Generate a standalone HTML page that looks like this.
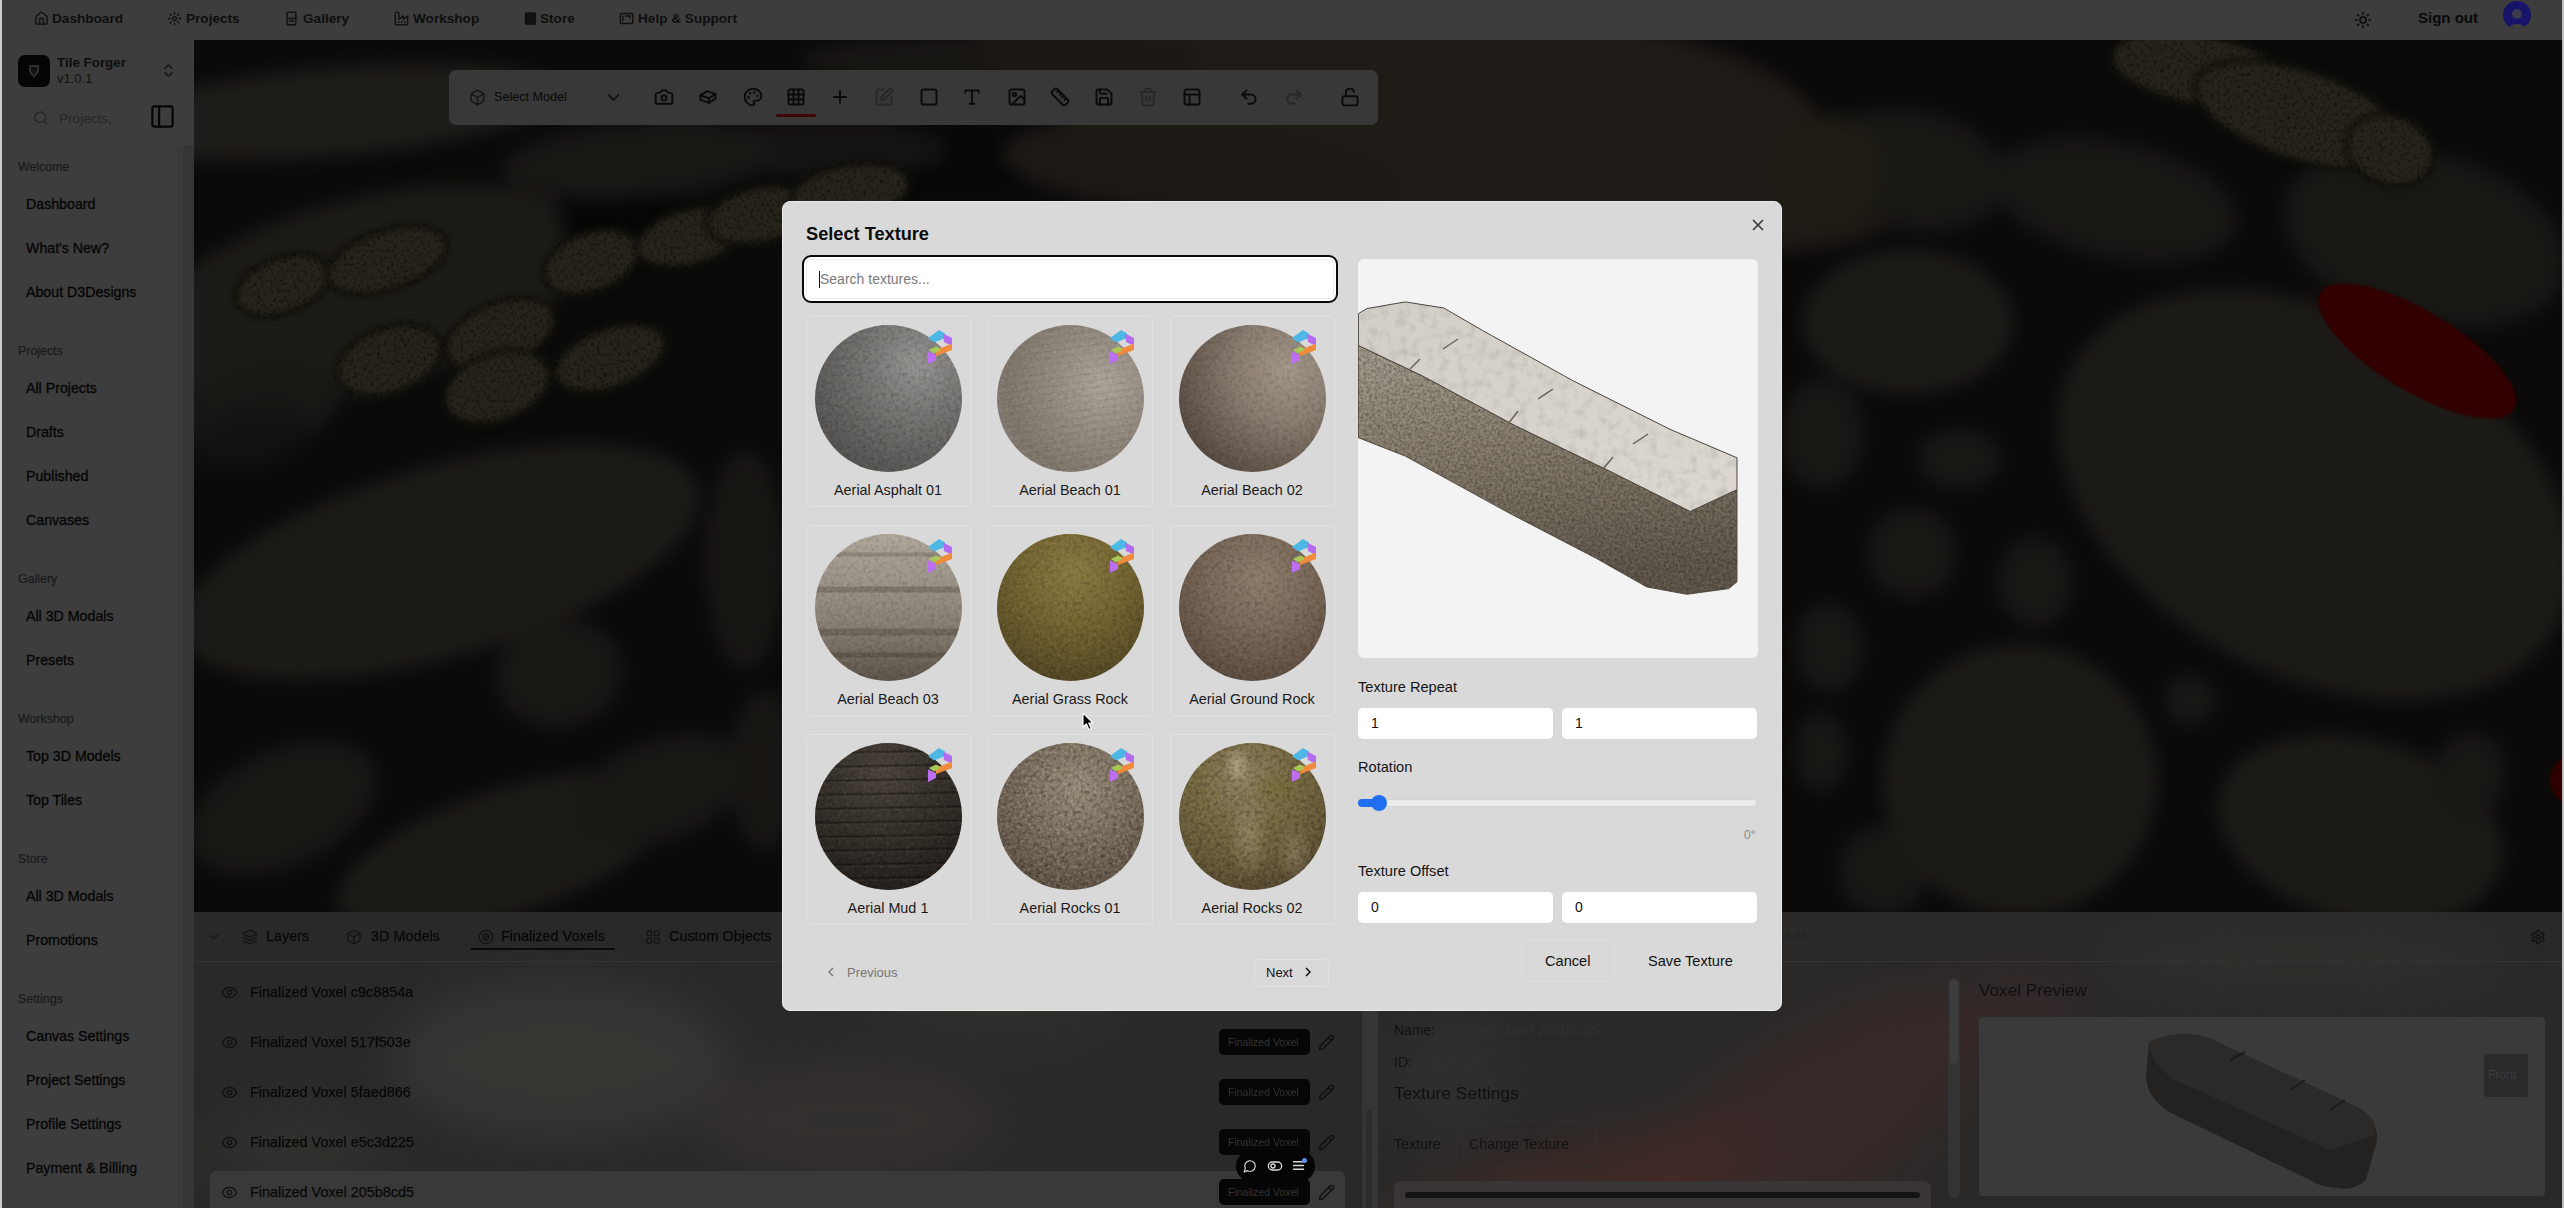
<!DOCTYPE html>
<html><head><meta charset="utf-8">
<style>
*{box-sizing:border-box;margin:0;padding:0}
html,body{width:2564px;height:1208px;overflow:hidden;background:#3c3c3c;font-family:"Liberation Sans",sans-serif;color:#111}
.a{position:absolute}
.nv{position:absolute;top:11px;font-size:13.6px;font-weight:bold;color:#0e0e0e;white-space:nowrap;line-height:16px;letter-spacing:0}
.nvi{position:absolute;top:12px;width:13px;height:13px}
.sh{position:absolute;left:18px;font-size:12.4px;color:#1a1a1a;-webkit-text-stroke:0.2px #1a1a1a;line-height:14px;white-space:nowrap}
.si{position:absolute;left:26px;font-size:14.2px;color:#050505;-webkit-text-stroke:0.3px #050505;line-height:16px;white-space:nowrap}
svg{display:block}
.card{position:absolute;width:165px;height:191px;border:1px solid #e2e2e2;border-radius:3px;background:#d9d9d9}
.sph{position:absolute;left:8px;top:8px;width:147px;height:147px;border-radius:50%}
.lbl{position:absolute;left:0;top:165px;width:162px;text-align:center;font-size:14.4px;color:#1a1a1a;line-height:16px;white-space:nowrap}
.badge{position:absolute;left:121px;top:12px;width:24px;height:35px}
.inp{position:absolute;width:195px;height:31px;background:#fff;border-radius:5px;font-size:14px;color:#111;padding:7px 0 0 13px;line-height:16px}
.ml{position:absolute;left:1358px;font-size:14.6px;color:#141414;line-height:16px;white-space:nowrap}

</style></head><body>
<div class="a" style="left:0;top:0;width:2px;height:1208px;background:#cdcdcd"></div>
<div class="a" style="left:2562px;top:0;width:2px;height:1208px;background:#bdbdbd"></div>
<div class="a" id="nav" style="left:2px;top:0;width:2560px;height:40px;background:#3d3d3d"></div>
<div class="a" id="side" style="left:2px;top:40px;width:192px;height:1168px;background:#3d3d3d"></div>
<div class="a" style="left:177px;top:145px;width:6px;height:1063px;background:#3a3a3a"></div>
<div class="a" style="left:183px;top:145px;width:11px;height:1063px;background:#353535;border-radius:5px 5px 0 0"></div>
<svg class="a" style="left:194px;top:40px" width="2368" height="873" viewBox="0 0 2368 873"><defs><filter id="bl" color-interpolation-filters="sRGB" x="-10%" y="-10%" width="120%" height="120%"><feGaussianBlur stdDeviation="9"/></filter><filter id="blm" color-interpolation-filters="sRGB" x="-10%" y="-10%" width="120%" height="120%"><feGaussianBlur stdDeviation="3"/></filter><filter id="mnz" x="0" y="0" width="100%" height="100%"><feTurbulence type="fractalNoise" baseFrequency="0.3" numOctaves="2" seed="5" result="n"/><feColorMatrix in="n" values="0 0 0 0 0  0 0 0 0 0  0 0 0 0 0  0 0 0 -2.5 1.3" result="a"/><feComposite in="a" in2="SourceAlpha" operator="in"/></filter><filter id="bl2" color-interpolation-filters="sRGB" x="-10%" y="-10%" width="120%" height="120%"><feGaussianBlur stdDeviation="1.2"/></filter></defs><rect width="2368" height="873" fill="#0b0a09"/><g filter="url(#bl)"><ellipse cx="136" cy="72" rx="230" ry="44" transform="rotate(-5 136 72)" fill="#1f1d19" opacity="1"/><ellipse cx="166" cy="255" rx="230" ry="95" transform="rotate(-15 166 255)" fill="#1d1b17" opacity="1"/><ellipse cx="66" cy="370" rx="80" ry="45" transform="rotate(-15 66 370)" fill="#191714" opacity="1"/><ellipse cx="706" cy="120" rx="170" ry="35" transform="rotate(0 706 120)" fill="#050505" opacity="0.9"/><ellipse cx="426" cy="175" rx="60" ry="60" transform="rotate(0 426 175)" fill="#050505" opacity="0.9"/><ellipse cx="636" cy="110" rx="120" ry="30" transform="rotate(0 636 110)" fill="#191714" opacity="0.8"/><ellipse cx="446" cy="120" rx="140" ry="38" transform="rotate(-5 446 120)" fill="#191714" opacity="1"/><ellipse cx="246" cy="522" rx="268" ry="95" transform="rotate(-16 246 522)" fill="#1d1b17" opacity="1"/><ellipse cx="365" cy="633" rx="64" ry="54" transform="rotate(-10 365 633)" fill="#191714" opacity="1"/><ellipse cx="89" cy="768" rx="100" ry="58" transform="rotate(-25 89 768)" fill="#191714" opacity="1"/><ellipse cx="311" cy="812" rx="175" ry="62" transform="rotate(-18 311 812)" fill="#1d1b17" opacity="1"/><ellipse cx="466" cy="750" rx="90" ry="50" transform="rotate(-20 466 750)" fill="#191714" opacity="1"/><ellipse cx="551" cy="520" rx="40" ry="110" transform="rotate(0 551 520)" fill="#191714" opacity="0.9"/><ellipse cx="571" cy="730" rx="35" ry="80" transform="rotate(0 571 730)" fill="#191714" opacity="0.9"/><ellipse cx="56" cy="400" rx="60" ry="30" transform="rotate(-15 56 400)" fill="#121110" opacity="0.8"/><ellipse cx="1246" cy="85" rx="470" ry="100" transform="rotate(10 1246 85)" fill="#1f1b16" opacity="1"/><ellipse cx="1426" cy="40" rx="200" ry="55" transform="rotate(12 1426 40)" fill="#1f1b16" opacity="1"/><ellipse cx="1006" cy="130" rx="200" ry="45" transform="rotate(5 1006 130)" fill="#1d1a15" opacity="1"/><ellipse cx="806" cy="20" rx="200" ry="25" transform="rotate(0 806 20)" fill="#191714" opacity="0.9"/><ellipse cx="1718" cy="130" rx="95" ry="60" transform="rotate(10 1718 130)" fill="#191714" opacity="1"/><ellipse cx="1921" cy="160" rx="125" ry="58" transform="rotate(12 1921 160)" fill="#191714" opacity="1"/><ellipse cx="2231" cy="198" rx="145" ry="85" transform="rotate(15 2231 198)" fill="#191714" opacity="1"/><ellipse cx="1714" cy="282" rx="105" ry="72" transform="rotate(0 1714 282)" fill="#1d1b17" opacity="1"/><ellipse cx="2121" cy="455" rx="275" ry="180" transform="rotate(28 2121 455)" fill="#1d1b17" opacity="1"/><ellipse cx="1628" cy="394" rx="42" ry="55" transform="rotate(0 1628 394)" fill="#191714" opacity="1"/><ellipse cx="1765" cy="419" rx="42" ry="30" transform="rotate(0 1765 419)" fill="#191714" opacity="1"/><ellipse cx="1718" cy="513" rx="45" ry="45" transform="rotate(0 1718 513)" fill="#191714" opacity="1"/><ellipse cx="1841" cy="542" rx="38" ry="45" transform="rotate(0 1841 542)" fill="#191714" opacity="1"/><ellipse cx="1635" cy="607" rx="34" ry="45" transform="rotate(0 1635 607)" fill="#191714" opacity="1"/><ellipse cx="1627" cy="712" rx="26" ry="40" transform="rotate(0 1627 712)" fill="#191714" opacity="1"/><ellipse cx="1689" cy="830" rx="45" ry="45" transform="rotate(0 1689 830)" fill="#191714" opacity="1"/><ellipse cx="1826" cy="740" rx="137" ry="135" transform="rotate(0 1826 740)" fill="#1d1b17" opacity="1"/><ellipse cx="2166" cy="790" rx="145" ry="90" transform="rotate(15 2166 790)" fill="#1d1b17" opacity="1"/><ellipse cx="1996" cy="660" rx="26" ry="26" transform="rotate(0 1996 660)" fill="#191714" opacity="1"/><ellipse cx="2275" cy="737" rx="36" ry="45" transform="rotate(10 2275 737)" fill="#191714" opacity="1"/><ellipse cx="1636" cy="130" rx="55" ry="55" transform="rotate(0 1636 130)" fill="#1e1c14" opacity="1"/></g><g filter="url(#blm)"><ellipse cx="89" cy="245" rx="50" ry="28" transform="rotate(-20 89 245)" fill="#26241a" opacity="1" stroke="#100f0a" stroke-width="5"/><ellipse cx="193" cy="220" rx="63" ry="30" transform="rotate(-18 193 220)" fill="#26241a" opacity="1" stroke="#100f0a" stroke-width="5"/><ellipse cx="195" cy="320" rx="55" ry="33" transform="rotate(-20 195 320)" fill="#26241a" opacity="1" stroke="#100f0a" stroke-width="5"/><ellipse cx="306" cy="294" rx="58" ry="32" transform="rotate(-22 306 294)" fill="#26241a" opacity="1" stroke="#100f0a" stroke-width="5"/><ellipse cx="303" cy="347" rx="55" ry="34" transform="rotate(-20 303 347)" fill="#26241a" opacity="1" stroke="#100f0a" stroke-width="5"/><ellipse cx="416" cy="318" rx="58" ry="30" transform="rotate(-20 416 318)" fill="#26241a" opacity="1" stroke="#100f0a" stroke-width="5"/><ellipse cx="397" cy="222" rx="50" ry="30" transform="rotate(-20 397 222)" fill="#26241a" opacity="1" stroke="#100f0a" stroke-width="5"/><ellipse cx="496" cy="197" rx="55" ry="28" transform="rotate(-15 496 197)" fill="#26241a" opacity="1" stroke="#100f0a" stroke-width="5"/><ellipse cx="566" cy="175" rx="55" ry="28" transform="rotate(-12 566 175)" fill="#26241a" opacity="1" stroke="#100f0a" stroke-width="5"/><ellipse cx="656" cy="152" rx="60" ry="28" transform="rotate(-10 656 152)" fill="#26241a" opacity="1" stroke="#100f0a" stroke-width="5"/><ellipse cx="2006" cy="30" rx="90" ry="35" transform="rotate(10 2006 30)" fill="#26241a" opacity="1" stroke="#100f0a" stroke-width="5"/><ellipse cx="2106" cy="75" rx="110" ry="45" transform="rotate(18 2106 75)" fill="#26241a" opacity="1" stroke="#100f0a" stroke-width="5"/><ellipse cx="2196" cy="110" rx="45" ry="35" transform="rotate(20 2196 110)" fill="#26241a" opacity="1" stroke="#100f0a" stroke-width="5"/></g><g filter="url(#mnz)" opacity="0.55"><ellipse cx="89" cy="245" rx="50" ry="28" transform="rotate(-20 89 245)" fill="#000" opacity="1" stroke="#100f0a" stroke-width="5"/><ellipse cx="193" cy="220" rx="63" ry="30" transform="rotate(-18 193 220)" fill="#000" opacity="1" stroke="#100f0a" stroke-width="5"/><ellipse cx="195" cy="320" rx="55" ry="33" transform="rotate(-20 195 320)" fill="#000" opacity="1" stroke="#100f0a" stroke-width="5"/><ellipse cx="306" cy="294" rx="58" ry="32" transform="rotate(-22 306 294)" fill="#000" opacity="1" stroke="#100f0a" stroke-width="5"/><ellipse cx="303" cy="347" rx="55" ry="34" transform="rotate(-20 303 347)" fill="#000" opacity="1" stroke="#100f0a" stroke-width="5"/><ellipse cx="416" cy="318" rx="58" ry="30" transform="rotate(-20 416 318)" fill="#000" opacity="1" stroke="#100f0a" stroke-width="5"/><ellipse cx="397" cy="222" rx="50" ry="30" transform="rotate(-20 397 222)" fill="#000" opacity="1" stroke="#100f0a" stroke-width="5"/><ellipse cx="496" cy="197" rx="55" ry="28" transform="rotate(-15 496 197)" fill="#000" opacity="1" stroke="#100f0a" stroke-width="5"/><ellipse cx="566" cy="175" rx="55" ry="28" transform="rotate(-12 566 175)" fill="#000" opacity="1" stroke="#100f0a" stroke-width="5"/><ellipse cx="656" cy="152" rx="60" ry="28" transform="rotate(-10 656 152)" fill="#000" opacity="1" stroke="#100f0a" stroke-width="5"/><ellipse cx="2006" cy="30" rx="90" ry="35" transform="rotate(10 2006 30)" fill="#000" opacity="1" stroke="#100f0a" stroke-width="5"/><ellipse cx="2106" cy="75" rx="110" ry="45" transform="rotate(18 2106 75)" fill="#000" opacity="1" stroke="#100f0a" stroke-width="5"/><ellipse cx="2196" cy="110" rx="45" ry="35" transform="rotate(20 2196 110)" fill="#000" opacity="1" stroke="#100f0a" stroke-width="5"/></g><g filter="url(#bl2)"><ellipse cx="2223" cy="311" rx="113" ry="40" transform="rotate(31 2223 311)" fill="#320000"/><ellipse cx="2388" cy="740" rx="32" ry="28" fill="#300000"/></g></svg>
<svg class="a" style="left:34px;top:11px;opacity:1;color:#111" width="15" height="15" viewBox="0 0 24 24" fill="none" stroke="currentColor" stroke-width="2.2" stroke-linecap="round" stroke-linejoin="round"><path d="M15 21v-8a1 1 0 0 0-1-1h-4a1 1 0 0 0-1 1v8"/><path d="M3 10a2 2 0 0 1 .709-1.528l7-5.999a2 2 0 0 1 2.582 0l7 5.999A2 2 0 0 1 21 10v9a2 2 0 0 1-2 2H5a2 2 0 0 1-2-2z"/></svg>
<div class="nv" style="left:52px">Dashboard</div>
<svg class="a" style="left:167px;top:11px;opacity:1;color:#111" width="15" height="15" viewBox="0 0 24 24" fill="none" stroke="currentColor" stroke-width="2.2" stroke-linecap="round" stroke-linejoin="round"><circle cx="12" cy="12" r="3"/><path d="M12 2v3M12 19v3M2 12h3M19 12h3M4.9 4.9l2.1 2.1M17 17l2.1 2.1M4.9 19.1 7 17M17 7l2.1-2.1"/></svg>
<div class="nv" style="left:186px">Projects</div>
<svg class="a" style="left:284px;top:11px;opacity:1;color:#111" width="15" height="15" viewBox="0 0 24 24" fill="none" stroke="currentColor" stroke-width="2.2" stroke-linecap="round" stroke-linejoin="round"><rect x="5" y="2" width="14" height="20" rx="1"/><path d="M5 12h14M9 16h6"/></svg>
<div class="nv" style="left:303px">Gallery</div>
<svg class="a" style="left:394px;top:11px;opacity:1;color:#111" width="15" height="15" viewBox="0 0 24 24" fill="none" stroke="currentColor" stroke-width="2.2" stroke-linecap="round" stroke-linejoin="round"><path d="M2 20a2 2 0 0 0 2 2h16a2 2 0 0 0 2-2V8l-7 5V8l-7 5V4a2 2 0 0 0-2-2H4a2 2 0 0 0-2 2Z"/><path d="M17 18h1M12 18h1M7 18h1"/></svg>
<div class="nv" style="left:413px">Workshop</div>
<svg class="a" style="left:523px;top:11px;opacity:1;color:#111" width="15" height="15" viewBox="0 0 24 24" fill="none" stroke="currentColor" stroke-width="2.2" stroke-linecap="round" stroke-linejoin="round"><rect x="4" y="3" width="16" height="18" rx="2" fill="currentColor"/></svg>
<div class="nv" style="left:540px">Store</div>
<svg class="a" style="left:619px;top:11px;opacity:1;color:#111" width="15" height="15" viewBox="0 0 24 24" fill="none" stroke="currentColor" stroke-width="2.2" stroke-linecap="round" stroke-linejoin="round"><rect x="2" y="4" width="20" height="16" rx="2"/><path d="M6 8v8M10 8h6M18 8v3"/></svg>
<div class="nv" style="left:638px">Help &amp; Support</div>
<svg class="a" style="left:2354px;top:11px;opacity:1;color:#0a0a0a" width="18" height="18" viewBox="0 0 24 24" fill="none" stroke="currentColor" stroke-width="2.2" stroke-linecap="round" stroke-linejoin="round"><circle cx="12" cy="12" r="4"/><path d="M12 2v2M12 20v2m-7.07-17.07 1.41 1.41m11.32 11.32 1.41 1.41M2 12h2M20 12h2M6.34 17.66l-1.41 1.41M19.07 4.93l-1.41 1.41"/></svg>
<div class="nv" style="left:2418px;top:10px;font-weight:bold;font-size:15px;color:#0a0a0a">Sign out</div>
<div class="a" style="left:2503px;top:1px;width:28px;height:28px;border-radius:50%;background:#17146a;overflow:hidden"><div class="a" style="left:9px;top:8px;width:10px;height:10px;border-radius:50%;background:#3a3a48"></div><div class="a" style="left:5px;top:23px;width:18px;height:12px;border-radius:50%;background:#3d3d3d"></div></div>
<div class="a" style="left:18px;top:55px;width:32px;height:32px;background:#050505;border-radius:7px"></div>
<svg class="a" style="left:26px;top:62px" width="16" height="18" viewBox="0 0 16 18"><path d="M3 3 L13 3 L13 10 L8 16 L3 10 Z" fill="#2e2e2e"/><path d="M5 5 L11 5 L11 9 L8 13 L5 9 Z" fill="#111"/></svg>
<div class="a" style="left:57px;top:56px;font-size:13.4px;font-weight:bold;color:#0e0e0e;line-height:14px">Tile Forger</div>
<div class="a" style="left:57px;top:72px;font-size:13px;color:#111;line-height:14px">v1.0.1</div>
<svg class="a" style="left:160px;top:62px;opacity:1;color:#151515" width="17" height="17" viewBox="0 0 24 24" fill="none" stroke="currentColor" stroke-width="2" stroke-linecap="round" stroke-linejoin="round"><path d="m7 15 5 5 5-5M7 9l5-5 5 5"/></svg>
<svg class="a" style="left:33px;top:110px;opacity:1;color:#262626" width="16" height="16" viewBox="0 0 24 24" fill="none" stroke="currentColor" stroke-width="2" stroke-linecap="round" stroke-linejoin="round"><circle cx="11" cy="11" r="8"/><path d="m21 21-4.3-4.3"/></svg>
<div class="a" style="left:59px;top:111px;font-size:13.6px;color:#262626;line-height:16px">Projects,</div>
<svg class="a" style="left:149px;top:103px;opacity:1;color:#050505" width="27" height="27" viewBox="0 0 24 24" fill="none" stroke="currentColor" stroke-width="1.9" stroke-linecap="round" stroke-linejoin="round"><rect x="3" y="3" width="18" height="18" rx="2"/><path d="M9 3v18"/></svg>
<div class="sh" style="top:160px">Welcome</div>
<div class="si" style="top:196px">Dashboard</div>
<div class="si" style="top:240px">What's New?</div>
<div class="si" style="top:284px">About D3Designs</div>
<div class="sh" style="top:344px">Projects</div>
<div class="si" style="top:380px">All Projects</div>
<div class="si" style="top:424px">Drafts</div>
<div class="si" style="top:468px">Published</div>
<div class="si" style="top:512px">Canvases</div>
<div class="sh" style="top:572px">Gallery</div>
<div class="si" style="top:608px">All 3D Modals</div>
<div class="si" style="top:652px">Presets</div>
<div class="sh" style="top:712px">Workshop</div>
<div class="si" style="top:748px">Top 3D Models</div>
<div class="si" style="top:792px">Top Tiles</div>
<div class="sh" style="top:852px">Store</div>
<div class="si" style="top:888px">All 3D Modals</div>
<div class="si" style="top:932px">Promotions</div>
<div class="sh" style="top:992px">Settings</div>
<div class="si" style="top:1028px">Canvas Settings</div>
<div class="si" style="top:1072px">Project Settings</div>
<div class="si" style="top:1116px">Profile Settings</div>
<div class="si" style="top:1160px">Payment &amp; Billing</div>
<div class="a" style="left:449px;top:70px;width:929px;height:55px;background:#383838;border-radius:7px"></div>
<svg class="a" style="left:469px;top:89px;opacity:1;color:#151515" width="17" height="17" viewBox="0 0 24 24" fill="none" stroke="currentColor" stroke-width="2" stroke-linecap="round" stroke-linejoin="round"><path d="M21 8a2 2 0 0 0-1-1.73l-7-4a2 2 0 0 0-2 0l-7 4A2 2 0 0 0 3 8v8a2 2 0 0 0 1 1.73l7 4a2 2 0 0 0 2 0l7-4A2 2 0 0 0 21 16Z"/><path d="m3.3 7 8.7 5 8.7-5"/><path d="M12 22V12"/></svg>
<div class="a" style="left:494px;top:90px;font-size:12.6px;color:#080808;line-height:14px;white-space:nowrap">Select Model</div>
<svg class="a" style="left:604px;top:88px;opacity:1;color:#111" width="19" height="19" viewBox="0 0 24 24" fill="none" stroke="currentColor" stroke-width="2.2" stroke-linecap="round" stroke-linejoin="round"><path d="m6 9 6 6 6-6"/></svg>
<svg class="a" style="left:654px;top:87px;opacity:1;color:#0a0a0a" width="20" height="20" viewBox="0 0 24 24" fill="none" stroke="currentColor" stroke-width="2.3" stroke-linecap="round" stroke-linejoin="round"><path d="M14.5 4h-5L7 7H4a2 2 0 0 0-2 2v9a2 2 0 0 0 2 2h16a2 2 0 0 0 2-2V9a2 2 0 0 0-2-2h-3l-2.5-3z"/><circle cx="12" cy="13" r="3"/></svg>
<svg class="a" style="left:698px;top:87px;opacity:1;color:#0a0a0a" width="20" height="20" viewBox="0 0 24 24" fill="none" stroke="currentColor" stroke-width="2.3" stroke-linecap="round" stroke-linejoin="round"><path d="M3 10 L11 5 L21 8.5 L21 14 L13 19 L3 15.5 Z"/><path d="M3 10 L13 13.5 L21 8.5"/><path d="M13 13.5 V19"/></svg>
<svg class="a" style="left:743px;top:87px;opacity:1;color:#0a0a0a" width="20" height="20" viewBox="0 0 24 24" fill="none" stroke="currentColor" stroke-width="2.3" stroke-linecap="round" stroke-linejoin="round"><circle cx="13.5" cy="6.5" r=".5" fill="currentColor"/><circle cx="17.5" cy="10.5" r=".5" fill="currentColor"/><circle cx="8.5" cy="7.5" r=".5" fill="currentColor"/><circle cx="6.5" cy="12.5" r=".5" fill="currentColor"/><path d="M12 2C6.5 2 2 6.5 2 12s4.5 10 10 10c.926 0 1.648-.746 1.648-1.688 0-.437-.18-.835-.437-1.125-.29-.289-.438-.652-.438-1.125a1.64 1.64 0 0 1 1.668-1.668h1.996c3.051 0 5.555-2.503 5.555-5.554C21.965 6.012 17.461 2 12 2z"/></svg>
<svg class="a" style="left:786px;top:87px;opacity:1;color:#0a0a0a" width="20" height="20" viewBox="0 0 24 24" fill="none" stroke="currentColor" stroke-width="2.3" stroke-linecap="round" stroke-linejoin="round"><rect x="3" y="3" width="18" height="18" rx="2"/><path d="M3 9h18M3 15h18M9 3v18M15 3v18"/></svg>
<svg class="a" style="left:830px;top:87px;opacity:1;color:#0a0a0a" width="20" height="20" viewBox="0 0 24 24" fill="none" stroke="currentColor" stroke-width="2.3" stroke-linecap="round" stroke-linejoin="round"><path d="M5 12h14M12 5v14"/></svg>
<svg class="a" style="left:874px;top:87px;opacity:0.35;color:#0a0a0a" width="20" height="20" viewBox="0 0 24 24" fill="none" stroke="currentColor" stroke-width="2.3" stroke-linecap="round" stroke-linejoin="round"><path d="M12 3H5a2 2 0 0 0-2 2v14a2 2 0 0 0 2 2h14a2 2 0 0 0 2-2v-7"/><path d="M18.375 2.625a2.121 2.121 0 1 1 3 3L12 15l-4 1 1-4Z"/></svg>
<svg class="a" style="left:919px;top:87px;opacity:1;color:#0a0a0a" width="20" height="20" viewBox="0 0 24 24" fill="none" stroke="currentColor" stroke-width="2.3" stroke-linecap="round" stroke-linejoin="round"><rect x="3" y="3" width="18" height="18" rx="2"/></svg>
<svg class="a" style="left:962px;top:87px;opacity:1;color:#0a0a0a" width="20" height="20" viewBox="0 0 24 24" fill="none" stroke="currentColor" stroke-width="2.3" stroke-linecap="round" stroke-linejoin="round"><path d="M4 7V4h16v3M9 20h6M12 4v16"/></svg>
<svg class="a" style="left:1007px;top:87px;opacity:1;color:#0a0a0a" width="20" height="20" viewBox="0 0 24 24" fill="none" stroke="currentColor" stroke-width="2.3" stroke-linecap="round" stroke-linejoin="round"><rect x="3" y="3" width="18" height="18" rx="2"/><circle cx="9" cy="9" r="2"/><path d="m21 15-3.086-3.086a2 2 0 0 0-2.828 0L6 21"/></svg>
<svg class="a" style="left:1050px;top:87px;opacity:1;color:#0a0a0a" width="20" height="20" viewBox="0 0 24 24" fill="none" stroke="currentColor" stroke-width="2.3" stroke-linecap="round" stroke-linejoin="round"><path d="M21.3 15.3a2.4 2.4 0 0 1 0 3.4l-2.6 2.6a2.4 2.4 0 0 1-3.4 0L2.7 8.7a2.41 2.41 0 0 1 0-3.4l2.6-2.6a2.41 2.41 0 0 1 3.4 0Z"/><path d="m14.5 12.5 2-2M11.5 9.5l2-2M8.5 6.5l2-2M17.5 15.5l2-2"/></svg>
<svg class="a" style="left:1094px;top:87px;opacity:1;color:#0a0a0a" width="20" height="20" viewBox="0 0 24 24" fill="none" stroke="currentColor" stroke-width="2.3" stroke-linecap="round" stroke-linejoin="round"><path d="M15.2 3a2 2 0 0 1 1.4.6l3.8 3.8a2 2 0 0 1 .6 1.4V19a2 2 0 0 1-2 2H5a2 2 0 0 1-2-2V5a2 2 0 0 1 2-2z"/><path d="M17 21v-7a1 1 0 0 0-1-1H8a1 1 0 0 0-1 1v7"/><path d="M7 3v4a1 1 0 0 0 1 1h7"/></svg>
<svg class="a" style="left:1138px;top:87px;opacity:0.35;color:#0a0a0a" width="20" height="20" viewBox="0 0 24 24" fill="none" stroke="currentColor" stroke-width="2.3" stroke-linecap="round" stroke-linejoin="round"><path d="M3 6h18M19 6v14c0 1-1 2-2 2H7c-1 0-2-1-2-2V6M8 6V4c0-1 1-2 2-2h4c1 0 2 1 2 2v2M10 11v6M14 11v6"/></svg>
<svg class="a" style="left:1182px;top:87px;opacity:1;color:#0a0a0a" width="20" height="20" viewBox="0 0 24 24" fill="none" stroke="currentColor" stroke-width="2.3" stroke-linecap="round" stroke-linejoin="round"><rect x="3" y="3" width="18" height="18" rx="2"/><path d="M3 9h18M9 21V9"/></svg>
<svg class="a" style="left:1239px;top:87px;opacity:1;color:#0a0a0a" width="20" height="20" viewBox="0 0 24 24" fill="none" stroke="currentColor" stroke-width="2.3" stroke-linecap="round" stroke-linejoin="round"><path d="M9 14 4 9l5-5"/><path d="M4 9h10.5a5.5 5.5 0 0 1 5.5 5.5a5.5 5.5 0 0 1-5.5 5.5H11"/></svg>
<svg class="a" style="left:1284px;top:87px;opacity:0.35;color:#0a0a0a" width="20" height="20" viewBox="0 0 24 24" fill="none" stroke="currentColor" stroke-width="2.3" stroke-linecap="round" stroke-linejoin="round"><path d="m15 14 5-5-5-5"/><path d="M20 9H9.5A5.5 5.5 0 0 0 4 14.5A5.5 5.5 0 0 0 9.5 20H13"/></svg>
<svg class="a" style="left:1340px;top:87px;opacity:1;color:#0a0a0a" width="20" height="20" viewBox="0 0 24 24" fill="none" stroke="currentColor" stroke-width="2.3" stroke-linecap="round" stroke-linejoin="round"><rect x="3" y="11" width="18" height="11" rx="2"/><path d="M7 11V7a5 5 0 0 1 9.9-1"/></svg>
<div class="a" style="left:776px;top:114px;width:40px;height:3px;background:#3e0606;border-radius:2px"></div><div class="a" style="left:194px;top:912px;width:2368px;height:296px;background:#2a2927"></div>
<svg class="a" style="left:194px;top:912px" width="2368" height="296" viewBox="194 912 2368 296"><defs><filter id="pbl" color-interpolation-filters="sRGB" x="-20%" y="-20%" width="140%" height="140%"><feGaussianBlur stdDeviation="22"/></filter></defs><g filter="url(#pbl)"><ellipse cx="1790" cy="1140" rx="230" ry="85" transform="rotate(-35 1790 1140)" fill="#44292a" opacity="0.5"/><ellipse cx="1560" cy="1200" rx="200" ry="50" transform="rotate(-15 1560 1200)" fill="#4a2a27" opacity="0.6"/><ellipse cx="2020" cy="1010" rx="60" ry="30" fill="#46282a" opacity="0.4"/><ellipse cx="560" cy="1060" rx="170" ry="80" fill="#3c3a37" opacity="0.7"/><ellipse cx="850" cy="1120" rx="150" ry="60" fill="#383633" opacity="0.6"/><ellipse cx="300" cy="1150" rx="90" ry="50" fill="#363431" opacity="0.6"/><ellipse cx="1000" cy="1000" rx="120" ry="50" fill="#353330" opacity="0.5"/><ellipse cx="1450" cy="1080" rx="60" ry="70" fill="#363431" opacity="0.5"/><ellipse cx="2300" cy="960" rx="200" ry="40" fill="#353330" opacity="0.5"/></g></svg>
<svg class="a" style="left:207px;top:930px;opacity:1;color:#151515" width="14" height="14" viewBox="0 0 24 24" fill="none" stroke="currentColor" stroke-width="2.2" stroke-linecap="round" stroke-linejoin="round"><path d="m6 9 6 6 6-6"/></svg>
<svg class="a" style="left:242px;top:929px;opacity:1;color:#141414" width="16" height="16" viewBox="0 0 24 24" fill="none" stroke="currentColor" stroke-width="2" stroke-linecap="round" stroke-linejoin="round"><path d="M12.83 2.18a2 2 0 0 0-1.66 0L2.6 6.08a1 1 0 0 0 0 1.83l8.58 3.91a2 2 0 0 0 1.66 0l8.58-3.9a1 1 0 0 0 0-1.83Z"/><path d="m22 17.65-9.17 4.16a2 2 0 0 1-1.66 0L2 17.65"/><path d="m22 12.65-9.17 4.16a2 2 0 0 1-1.66 0L2 12.65"/></svg>
<div class="a" style="left:266px;top:928px;font-size:14.4px;color:#080808;-webkit-text-stroke:0.25px #080808;line-height:16px;white-space:nowrap">Layers</div>
<svg class="a" style="left:346px;top:929px;opacity:1;color:#141414" width="16" height="16" viewBox="0 0 24 24" fill="none" stroke="currentColor" stroke-width="2" stroke-linecap="round" stroke-linejoin="round"><path d="M21 8a2 2 0 0 0-1-1.73l-7-4a2 2 0 0 0-2 0l-7 4A2 2 0 0 0 3 8v8a2 2 0 0 0 1 1.73l7 4a2 2 0 0 0 2 0l7-4A2 2 0 0 0 21 16Z"/><path d="m3.3 7 8.7 5 8.7-5"/><path d="M12 22V12"/></svg>
<div class="a" style="left:371px;top:928px;font-size:14.4px;color:#080808;-webkit-text-stroke:0.25px #080808;line-height:16px;white-space:nowrap">3D Models</div>
<svg class="a" style="left:478px;top:929px;opacity:1;color:#141414" width="16" height="16" viewBox="0 0 24 24" fill="none" stroke="currentColor" stroke-width="2" stroke-linecap="round" stroke-linejoin="round"><circle cx="12" cy="12" r="10"/><path d="M12 7 L16 9.5 V14.5 L12 17 L8 14.5 V9.5 Z"/><path d="M8 9.5 L12 12 L16 9.5 M12 12 V17"/></svg>
<div class="a" style="left:501px;top:928px;font-size:14.4px;color:#080808;-webkit-text-stroke:0.25px #080808;line-height:16px;white-space:nowrap">Finalized Voxels</div>
<svg class="a" style="left:645px;top:929px;opacity:1;color:#141414" width="16" height="16" viewBox="0 0 24 24" fill="none" stroke="currentColor" stroke-width="2" stroke-linecap="round" stroke-linejoin="round"><rect x="3" y="3" width="7" height="7" rx="1"/><rect x="14" y="3" width="7" height="7" rx="1"/><rect x="14" y="14" width="7" height="7" rx="1"/><rect x="3" y="14" width="7" height="7" rx="1"/></svg>
<div class="a" style="left:669px;top:928px;font-size:14.4px;color:#080808;-webkit-text-stroke:0.25px #080808;line-height:16px;white-space:nowrap">Custom Objects</div>
<div class="a" style="left:471px;top:948px;width:144px;height:2px;background:#0a0a0a"></div>
<div class="a" style="left:1783px;top:929px;font-size:12px;color:#222;line-height:14px">A #4</div>
<svg class="a" style="left:2530px;top:929px;opacity:1;color:#111" width="16" height="16" viewBox="0 0 24 24" fill="none" stroke="currentColor" stroke-width="2" stroke-linecap="round" stroke-linejoin="round"><path d="M12.22 2h-.44a2 2 0 0 0-2 2v.18a2 2 0 0 1-1 1.73l-.43.25a2 2 0 0 1-2 0l-.15-.08a2 2 0 0 0-2.73.73l-.22.38a2 2 0 0 0 .73 2.73l.15.1a2 2 0 0 1 1 1.72v.51a2 2 0 0 1-1 1.74l-.15.09a2 2 0 0 0-.73 2.73l.22.38a2 2 0 0 0 2.73.73l.15-.08a2 2 0 0 1 2 0l.43.25a2 2 0 0 1 1 1.73V20a2 2 0 0 0 2 2h.44a2 2 0 0 0 2-2v-.18a2 2 0 0 1 1-1.73l.43-.25a2 2 0 0 1 2 0l.15.08a2 2 0 0 0 2.73-.73l.22-.39a2 2 0 0 0-.73-2.73l-.15-.08a2 2 0 0 1-1-1.74v-.5a2 2 0 0 1 1-1.74l.15-.09a2 2 0 0 0 .73-2.73l-.22-.38a2 2 0 0 0-2.73-.73l-.15.08a2 2 0 0 1-2 0l-.43-.25a2 2 0 0 1-1-1.73V4a2 2 0 0 0-2-2z"/><circle cx="12" cy="12" r="3"/></svg>
<div class="a" style="left:194px;top:961px;width:2368px;height:1px;background:#343331"></div>
<svg class="a" style="left:221px;top:984px;opacity:1;color:#121212" width="17" height="17" viewBox="0 0 24 24" fill="none" stroke="currentColor" stroke-width="2" stroke-linecap="round" stroke-linejoin="round"><path d="M2.062 12.348a1 1 0 0 1 0-.696 10.75 10.75 0 0 1 19.876 0 1 1 0 0 1 0 .696 10.75 10.75 0 0 1-19.876 0"/><circle cx="12" cy="12" r="3"/></svg>
<div class="a" style="left:250px;top:984px;font-size:14.4px;color:#080808;-webkit-text-stroke:0.25px #080808;line-height:16px;white-space:nowrap">Finalized Voxel c9c8854a</div>
<svg class="a" style="left:221px;top:1034px;opacity:1;color:#121212" width="17" height="17" viewBox="0 0 24 24" fill="none" stroke="currentColor" stroke-width="2" stroke-linecap="round" stroke-linejoin="round"><path d="M2.062 12.348a1 1 0 0 1 0-.696 10.75 10.75 0 0 1 19.876 0 1 1 0 0 1 0 .696 10.75 10.75 0 0 1-19.876 0"/><circle cx="12" cy="12" r="3"/></svg>
<div class="a" style="left:250px;top:1034px;font-size:14.4px;color:#080808;-webkit-text-stroke:0.25px #080808;line-height:16px;white-space:nowrap">Finalized Voxel 517f503e</div>
<div class="a" style="left:1219px;top:1029px;width:91px;height:26px;background:#060606;border-radius:5px"></div>
<div class="a" style="left:1228px;top:1036px;font-size:10.5px;color:#333;line-height:12px;white-space:nowrap">Finalized Voxel</div>
<svg class="a" style="left:1318px;top:1034px;opacity:1;color:#101010" width="17" height="17" viewBox="0 0 24 24" fill="none" stroke="currentColor" stroke-width="2" stroke-linecap="round" stroke-linejoin="round"><path d="M21.174 6.812a1 1 0 0 0-3.986-3.987L3.842 16.174a2 2 0 0 0-.5.83l-1.321 4.352a.5.5 0 0 0 .623.622l4.353-1.32a2 2 0 0 0 .83-.497z"/><path d="m15 5 4 4"/></svg>
<svg class="a" style="left:221px;top:1084px;opacity:1;color:#121212" width="17" height="17" viewBox="0 0 24 24" fill="none" stroke="currentColor" stroke-width="2" stroke-linecap="round" stroke-linejoin="round"><path d="M2.062 12.348a1 1 0 0 1 0-.696 10.75 10.75 0 0 1 19.876 0 1 1 0 0 1 0 .696 10.75 10.75 0 0 1-19.876 0"/><circle cx="12" cy="12" r="3"/></svg>
<div class="a" style="left:250px;top:1084px;font-size:14.4px;color:#080808;-webkit-text-stroke:0.25px #080808;line-height:16px;white-space:nowrap">Finalized Voxel 5faed866</div>
<div class="a" style="left:1219px;top:1079px;width:91px;height:26px;background:#060606;border-radius:5px"></div>
<div class="a" style="left:1228px;top:1086px;font-size:10.5px;color:#333;line-height:12px;white-space:nowrap">Finalized Voxel</div>
<svg class="a" style="left:1318px;top:1084px;opacity:1;color:#101010" width="17" height="17" viewBox="0 0 24 24" fill="none" stroke="currentColor" stroke-width="2" stroke-linecap="round" stroke-linejoin="round"><path d="M21.174 6.812a1 1 0 0 0-3.986-3.987L3.842 16.174a2 2 0 0 0-.5.83l-1.321 4.352a.5.5 0 0 0 .623.622l4.353-1.32a2 2 0 0 0 .83-.497z"/><path d="m15 5 4 4"/></svg>
<svg class="a" style="left:221px;top:1134px;opacity:1;color:#121212" width="17" height="17" viewBox="0 0 24 24" fill="none" stroke="currentColor" stroke-width="2" stroke-linecap="round" stroke-linejoin="round"><path d="M2.062 12.348a1 1 0 0 1 0-.696 10.75 10.75 0 0 1 19.876 0 1 1 0 0 1 0 .696 10.75 10.75 0 0 1-19.876 0"/><circle cx="12" cy="12" r="3"/></svg>
<div class="a" style="left:250px;top:1134px;font-size:14.4px;color:#080808;-webkit-text-stroke:0.25px #080808;line-height:16px;white-space:nowrap">Finalized Voxel e5c3d225</div>
<div class="a" style="left:1219px;top:1129px;width:91px;height:26px;background:#060606;border-radius:5px"></div>
<div class="a" style="left:1228px;top:1136px;font-size:10.5px;color:#333;line-height:12px;white-space:nowrap">Finalized Voxel</div>
<svg class="a" style="left:1318px;top:1134px;opacity:1;color:#101010" width="17" height="17" viewBox="0 0 24 24" fill="none" stroke="currentColor" stroke-width="2" stroke-linecap="round" stroke-linejoin="round"><path d="M21.174 6.812a1 1 0 0 0-3.986-3.987L3.842 16.174a2 2 0 0 0-.5.83l-1.321 4.352a.5.5 0 0 0 .623.622l4.353-1.32a2 2 0 0 0 .83-.497z"/><path d="m15 5 4 4"/></svg>
<div class="a" style="left:210px;top:1171px;width:1135px;height:37px;background:#393939;border-radius:6px 6px 0 0"></div>
<svg class="a" style="left:221px;top:1184px;opacity:1;color:#121212" width="17" height="17" viewBox="0 0 24 24" fill="none" stroke="currentColor" stroke-width="2" stroke-linecap="round" stroke-linejoin="round"><path d="M2.062 12.348a1 1 0 0 1 0-.696 10.75 10.75 0 0 1 19.876 0 1 1 0 0 1 0 .696 10.75 10.75 0 0 1-19.876 0"/><circle cx="12" cy="12" r="3"/></svg>
<div class="a" style="left:250px;top:1184px;font-size:14.4px;color:#080808;-webkit-text-stroke:0.25px #080808;line-height:16px;white-space:nowrap">Finalized Voxel 205b8cd5</div>
<div class="a" style="left:1219px;top:1179px;width:91px;height:26px;background:#060606;border-radius:5px"></div>
<div class="a" style="left:1228px;top:1186px;font-size:10.5px;color:#333;line-height:12px;white-space:nowrap">Finalized Voxel</div>
<svg class="a" style="left:1318px;top:1184px;opacity:1;color:#101010" width="17" height="17" viewBox="0 0 24 24" fill="none" stroke="currentColor" stroke-width="2" stroke-linecap="round" stroke-linejoin="round"><path d="M21.174 6.812a1 1 0 0 0-3.986-3.987L3.842 16.174a2 2 0 0 0-.5.83l-1.321 4.352a.5.5 0 0 0 .623.622l4.353-1.32a2 2 0 0 0 .83-.497z"/><path d="m15 5 4 4"/></svg>
<div class="a" style="left:1236px;top:1150px;width:79px;height:32px;background:#050505;border-radius:16px"></div>
<svg class="a" style="left:1243px;top:1159px;opacity:1;color:#d8d8d8" width="14" height="14" viewBox="0 0 24 24" fill="none" stroke="currentColor" stroke-width="2" stroke-linecap="round" stroke-linejoin="round"><path d="M7.9 20A9 9 0 1 0 4 16.1L2 22Z"/></svg>
<svg class="a" style="left:1267px;top:1158px;opacity:1;color:#d8d8d8" width="16" height="16" viewBox="0 0 24 24" fill="none" stroke="currentColor" stroke-width="2" stroke-linecap="round" stroke-linejoin="round"><rect x="2" y="6" width="20" height="12" rx="6"/><circle cx="9" cy="12" r="3"/></svg>
<svg class="a" style="left:1291px;top:1158px;opacity:1;color:#d8d8d8" width="15" height="15" viewBox="0 0 24 24" fill="none" stroke="currentColor" stroke-width="2.2" stroke-linecap="round" stroke-linejoin="round"><path d="M4 6h16M4 12h16M4 18h16"/></svg>
<div class="a" style="left:1302px;top:1158px;width:5px;height:5px;border-radius:50%;background:#5b8ee6"></div>
<div class="a" style="left:1362px;top:1011px;width:16px;height:197px;background:#353535"></div>
<div class="a" style="left:1366px;top:1110px;width:6px;height:98px;background:#2c2c2c;border-radius:3px"></div>
<div class="a" style="left:1394px;top:1022px;font-size:14px;color:#121212;line-height:16px">Name:</div>
<div class="a" style="left:1440px;top:1022px;font-size:14px;color:#313131;line-height:16px;white-space:nowrap">Finalized Voxel 205b8cd5</div>
<div class="a" style="left:1394px;top:1054px;font-size:14px;color:#121212;line-height:16px">ID:</div>
<div class="a" style="left:1415px;top:1054px;font-size:14px;color:#313131;line-height:16px;white-space:nowrap">205b8cd5</div>
<div class="a" style="left:1394px;top:1083px;font-size:17.4px;color:#101010;line-height:20px;white-space:nowrap">Texture Settings</div>
<div class="a" style="left:1394px;top:1136px;font-size:14.2px;color:#121212;line-height:16px">Texture</div>
<div class="a" style="left:1456px;top:1121px;width:140px;height:46px;border:1px solid #302f2d;border-radius:6px"></div>
<div class="a" style="left:1469px;top:1136px;font-size:14.2px;color:#121212;line-height:16px;white-space:nowrap">Change Texture</div>
<div class="a" style="left:1394px;top:1181px;width:537px;height:27px;background:#383534;border-radius:8px 8px 0 0"></div>
<div class="a" style="left:1405px;top:1192px;width:515px;height:6px;background:#141313;border-radius:3px"></div>
<div class="a" style="left:1948px;top:978px;width:12px;height:220px;background:#333;border-radius:6px"></div>
<div class="a" style="left:1950px;top:980px;width:8px;height:84px;background:#3d3d3d;border-radius:4px"></div>
<div class="a" style="left:1979px;top:980px;font-size:17.2px;color:#0f0f0f;line-height:20px;white-space:nowrap">Voxel Preview</div>
<div class="a" style="left:1979px;top:1017px;width:566px;height:179px;background:#3a3a3a;border-radius:4px"></div>
<svg class="a" style="left:2100px;top:1010px" width="320" height="198" viewBox="2100 1010 320 198"><path d="M2149 1043 C2160 1034 2195 1030 2215 1041 L2359 1108 C2372 1115 2378 1128 2377 1141 L2366 1179 C2360 1188 2345 1190 2338 1188 C2325 1187 2315 1184 2310 1180 L2169 1112 C2155 1103 2146 1090 2146 1076 Z" fill="#242221"/><path d="M2149 1043 C2160 1034 2195 1030 2215 1041 L2359 1108 C2372 1115 2378 1128 2375 1135 L2330 1150 L2175 1080 C2160 1070 2150 1058 2149 1043 Z" fill="#2b2a28"/><path d="M2230 1060 L2245 1052 M2290 1090 L2305 1080 M2330 1110 L2345 1100" stroke="#1c1b1a" stroke-width="2"/></svg>
<div class="a" style="left:2484px;top:1054px;width:44px;height:43px;background:#2a2a2a;border-radius:3px"></div>
<div class="a" style="left:2488px;top:1068px;font-size:12px;color:#3c3c3c;line-height:14px">Front</div><div class="a" id="modal" style="left:782px;top:201px;width:1000px;height:810px;background:#d9d9d9;border-radius:8px;border:1px solid #e9e9e9"></div>
<div class="a" style="left:806px;top:224px;font-size:18.2px;font-weight:bold;color:#0c0c0c;line-height:20px;white-space:nowrap">Select Texture</div>
<div class="a" style="left:802px;top:255px;width:536px;height:48px;background:#fff;border:2px solid #0a0a0a;border-radius:9px;box-shadow:inset 0 0 0 2px #fff, inset 0 0 0 3px #ececec"></div>
<div class="a" style="left:820px;top:271px;font-size:14px;color:#7a7a7a;line-height:16px;white-space:nowrap">Search textures...</div>
<div class="a" style="left:819px;top:271px;width:1px;height:17px;background:#111"></div>
<svg width="0" height="0" style="position:absolute"><defs><filter id="nzd" x="0" y="0" width="100%" height="100%"><feTurbulence type="fractalNoise" baseFrequency="0.25" numOctaves="3" seed="7"/><feColorMatrix values="0 0 0 0 0  0 0 0 0 0  0 0 0 0 0  0 0 0 -2.2 1.25"/></filter><filter id="nzl" x="0" y="0" width="100%" height="100%"><feTurbulence type="fractalNoise" baseFrequency="0.35" numOctaves="2" seed="11"/><feColorMatrix values="0 0 0 0 1  0 0 0 0 1  0 0 0 0 1  0 0 0 -2.2 1.2"/></filter></defs></svg>
<div class="card" style="left:806px;top:316px"><div class="sph" style="background:radial-gradient(circle at 70% 26%, #969491 0%, #7a7875 30%, #62605d 60%, #464442 100%);overflow:hidden"><svg class="a" style="left:0;top:0" width="147" height="147"><rect width="147" height="147" filter="url(#nzd)" opacity="0.18"/><rect width="147" height="147" filter="url(#nzl)" opacity="0.1"/></svg></div><svg class="badge" viewBox="0 0 24 35"><polygon points="0,9 11,1 17,4.5 17,9 6,13.5" fill="#4db8e6"/><polygon points="15,4.5 24,9 24,17 16,13" fill="#b56cf0"/><polygon points="8,21 24,14.5 24,21 8,27" fill="#f08a3c"/><polygon points="1,21 8,17.5 12,19.5 12,21.5 6,24.5" fill="#a9c957"/><polygon points="0,22.5 8,26 8,31 0,35" fill="#bd6ef2"/></svg><div class="lbl">Aerial Asphalt 01</div></div>
<div class="card" style="left:988px;top:316px"><div class="sph" style="background:radial-gradient(circle at 72% 40%, #aca59b 0%, #958c81 35%, #7f766b 70%, #8c8985 100%);overflow:hidden"><div class="a" style="left:0;top:0;width:147px;height:147px;background:repeating-linear-gradient(172deg, rgba(0,0,0,0) 0px, rgba(0,0,0,0) 4px, rgba(60,50,40,.09) 5px, rgba(0,0,0,0) 7px)"></div><svg class="a" style="left:0;top:0" width="147" height="147"><rect width="147" height="147" filter="url(#nzd)" opacity="0.1"/><rect width="147" height="147" filter="url(#nzl)" opacity="0.1"/></svg></div><svg class="badge" viewBox="0 0 24 35"><polygon points="0,9 11,1 17,4.5 17,9 6,13.5" fill="#4db8e6"/><polygon points="15,4.5 24,9 24,17 16,13" fill="#b56cf0"/><polygon points="8,21 24,14.5 24,21 8,27" fill="#f08a3c"/><polygon points="1,21 8,17.5 12,19.5 12,21.5 6,24.5" fill="#a9c957"/><polygon points="0,22.5 8,26 8,31 0,35" fill="#bd6ef2"/></svg><div class="lbl">Aerial Beach 01</div></div>
<div class="card" style="left:1170px;top:316px"><div class="sph" style="background:radial-gradient(circle at 74% 30%, #a39789 0%, #897c70 35%, #675a4f 65%, #3e332c 100%);overflow:hidden"><svg class="a" style="left:0;top:0" width="147" height="147"><rect width="147" height="147" filter="url(#nzd)" opacity="0.14"/><rect width="147" height="147" filter="url(#nzl)" opacity="0.08"/></svg></div><svg class="badge" viewBox="0 0 24 35"><polygon points="0,9 11,1 17,4.5 17,9 6,13.5" fill="#4db8e6"/><polygon points="15,4.5 24,9 24,17 16,13" fill="#b56cf0"/><polygon points="8,21 24,14.5 24,21 8,27" fill="#f08a3c"/><polygon points="1,21 8,17.5 12,19.5 12,21.5 6,24.5" fill="#a9c957"/><polygon points="0,22.5 8,26 8,31 0,35" fill="#bd6ef2"/></svg><div class="lbl">Aerial Beach 02</div></div>
<div class="card" style="left:806px;top:525px"><div class="sph" style="background:linear-gradient(180deg, #aea699 0%, #9b9286 35%, #857c70 65%, #5a5148 100%);overflow:hidden"><div class="a" style="left:0;top:0;width:147px;height:147px;background:linear-gradient(180deg, transparent 0 18px, rgba(70,60,50,.25) 19px 22px, transparent 23px 52px, rgba(60,52,44,.3) 53px 58px, transparent 59px 94px, rgba(60,52,44,.3) 95px 101px, transparent 102px 118px, rgba(50,44,38,.28) 119px 123px, transparent 124px)"></div><svg class="a" style="left:0;top:0" width="147" height="147"><rect width="147" height="147" filter="url(#nzd)" opacity="0.14"/><rect width="147" height="147" filter="url(#nzl)" opacity="0.1"/></svg></div><svg class="badge" viewBox="0 0 24 35"><polygon points="0,9 11,1 17,4.5 17,9 6,13.5" fill="#4db8e6"/><polygon points="15,4.5 24,9 24,17 16,13" fill="#b56cf0"/><polygon points="8,21 24,14.5 24,21 8,27" fill="#f08a3c"/><polygon points="1,21 8,17.5 12,19.5 12,21.5 6,24.5" fill="#a9c957"/><polygon points="0,22.5 8,26 8,31 0,35" fill="#bd6ef2"/></svg><div class="lbl">Aerial Beach 03</div></div>
<div class="card" style="left:988px;top:525px"><div class="sph" style="background:radial-gradient(circle at 52% 26%, #8a7a40 0%, #756531 38%, #5f5127 68%, #3f351b 100%);overflow:hidden"><svg class="a" style="left:0;top:0" width="147" height="147"><rect width="147" height="147" filter="url(#nzd)" opacity="0.2"/><rect width="147" height="147" filter="url(#nzl)" opacity="0.1"/></svg></div><svg class="badge" viewBox="0 0 24 35"><polygon points="0,9 11,1 17,4.5 17,9 6,13.5" fill="#4db8e6"/><polygon points="15,4.5 24,9 24,17 16,13" fill="#b56cf0"/><polygon points="8,21 24,14.5 24,21 8,27" fill="#f08a3c"/><polygon points="1,21 8,17.5 12,19.5 12,21.5 6,24.5" fill="#a9c957"/><polygon points="0,22.5 8,26 8,31 0,35" fill="#bd6ef2"/></svg><div class="lbl">Aerial Grass Rock</div></div>
<div class="card" style="left:1170px;top:525px"><div class="sph" style="background:radial-gradient(circle at 55% 30%, #8e7d6b 0%, #7a6858 38%, #655446 68%, #463a30 100%);overflow:hidden"><svg class="a" style="left:0;top:0" width="147" height="147"><rect width="147" height="147" filter="url(#nzd)" opacity="0.2"/><rect width="147" height="147" filter="url(#nzl)" opacity="0.1"/></svg></div><svg class="badge" viewBox="0 0 24 35"><polygon points="0,9 11,1 17,4.5 17,9 6,13.5" fill="#4db8e6"/><polygon points="15,4.5 24,9 24,17 16,13" fill="#b56cf0"/><polygon points="8,21 24,14.5 24,21 8,27" fill="#f08a3c"/><polygon points="1,21 8,17.5 12,19.5 12,21.5 6,24.5" fill="#a9c957"/><polygon points="0,22.5 8,26 8,31 0,35" fill="#bd6ef2"/></svg><div class="lbl">Aerial Ground Rock</div></div>
<div class="card" style="left:806px;top:734px"><div class="sph" style="background:radial-gradient(circle at 45% 20%, #4a433c 0%, #36302a 40%, #29241f 70%, #1a1613 100%);overflow:hidden"><div class="a" style="left:0;top:0;width:147px;height:147px;background:repeating-linear-gradient(179deg, rgba(0,0,0,0) 0px, rgba(0,0,0,0) 8px, rgba(0,0,0,.4) 10px, rgba(90,80,70,.18) 12px, rgba(0,0,0,0) 14px)"></div><svg class="a" style="left:0;top:0" width="147" height="147"><rect width="147" height="147" filter="url(#nzd)" opacity="0.2"/><rect width="147" height="147" filter="url(#nzl)" opacity="0.08"/></svg></div><svg class="badge" viewBox="0 0 24 35"><polygon points="0,9 11,1 17,4.5 17,9 6,13.5" fill="#4db8e6"/><polygon points="15,4.5 24,9 24,17 16,13" fill="#b56cf0"/><polygon points="8,21 24,14.5 24,21 8,27" fill="#f08a3c"/><polygon points="1,21 8,17.5 12,19.5 12,21.5 6,24.5" fill="#a9c957"/><polygon points="0,22.5 8,26 8,31 0,35" fill="#bd6ef2"/></svg><div class="lbl">Aerial Mud 1</div></div>
<div class="card" style="left:988px;top:734px"><div class="sph" style="background:radial-gradient(circle at 55% 30%, #968a76 0%, #7c705e 38%, #66594a 68%, #463c30 100%);overflow:hidden"><svg class="a" style="left:0;top:0" width="147" height="147"><rect width="147" height="147" filter="url(#nzd)" opacity="0.35"/><rect width="147" height="147" filter="url(#nzl)" opacity="0.25"/></svg></div><svg class="badge" viewBox="0 0 24 35"><polygon points="0,9 11,1 17,4.5 17,9 6,13.5" fill="#4db8e6"/><polygon points="15,4.5 24,9 24,17 16,13" fill="#b56cf0"/><polygon points="8,21 24,14.5 24,21 8,27" fill="#f08a3c"/><polygon points="1,21 8,17.5 12,19.5 12,21.5 6,24.5" fill="#a9c957"/><polygon points="0,22.5 8,26 8,31 0,35" fill="#bd6ef2"/></svg><div class="lbl">Aerial Rocks 01</div></div>
<div class="card" style="left:1170px;top:734px"><div class="sph" style="background:radial-gradient(circle at 45% 25%, #8f8060 0%, #75683f 38%, #645636 68%, #3e3424 100%);overflow:hidden"><div class="a" style="left:0;top:0;width:147px;height:147px;background:radial-gradient(ellipse 14px 20px at 58px 22px, rgba(190,175,140,.75), transparent),radial-gradient(ellipse 22px 40px at 70px 95px, rgba(170,155,125,.5), transparent),radial-gradient(ellipse 18px 30px at 115px 110px, rgba(165,150,120,.45), transparent),radial-gradient(ellipse 30px 20px at 95px 45px, rgba(110,100,40,.5), transparent)"></div><svg class="a" style="left:0;top:0" width="147" height="147"><rect width="147" height="147" filter="url(#nzd)" opacity="0.3"/><rect width="147" height="147" filter="url(#nzl)" opacity="0.12"/></svg></div><svg class="badge" viewBox="0 0 24 35"><polygon points="0,9 11,1 17,4.5 17,9 6,13.5" fill="#4db8e6"/><polygon points="15,4.5 24,9 24,17 16,13" fill="#b56cf0"/><polygon points="8,21 24,14.5 24,21 8,27" fill="#f08a3c"/><polygon points="1,21 8,17.5 12,19.5 12,21.5 6,24.5" fill="#a9c957"/><polygon points="0,22.5 8,26 8,31 0,35" fill="#bd6ef2"/></svg><div class="lbl">Aerial Rocks 02</div></div>
<div class="a" style="left:808px;top:959px;width:97px;height:28px;border:1px solid #dcdcdc;border-radius:5px"></div>
<svg class="a" style="left:826px;top:966px" width="10" height="12" viewBox="0 0 10 12"><path d="M7 2 L3 6 L7 10" fill="none" stroke="#777" stroke-width="1.4"/></svg>
<div class="a" style="left:847px;top:965px;font-size:13px;color:#757575;line-height:16px">Previous</div>
<div class="a" style="left:1254px;top:959px;width:75px;height:28px;border:1px solid #e2e2e2;border-radius:5px"></div>
<div class="a" style="left:1266px;top:965px;font-size:13px;color:#111;line-height:16px">Next</div>
<svg class="a" style="left:1303px;top:966px" width="10" height="12" viewBox="0 0 10 12"><path d="M3 2 L7 6 L3 10" fill="none" stroke="#111" stroke-width="1.5"/></svg>
<svg class="a" style="left:1752px;top:219px" width="12" height="12" viewBox="0 0 12 12"><path d="M1 1 L11 11 M11 1 L1 11" stroke="#333" stroke-width="1.5"/></svg>
<div class="a" id="prev" style="left:1358px;top:259px;width:400px;height:399px;background:#f3f3f3;border-radius:6px;overflow:hidden"><svg width="400" height="399" viewBox="0 0 400 399"><defs><linearGradient id="sideg" x1="0" y1="0" x2="0.15" y2="1"><stop offset="0" stop-color="#aca395"/><stop offset="0.45" stop-color="#8c8272"/><stop offset="1" stop-color="#665c4f"/></linearGradient><linearGradient id="topg" x1="0" y1="0" x2="1" y2="1"><stop offset="0" stop-color="#d3cfc7"/><stop offset="1" stop-color="#dcd8d0"/></linearGradient><filter id="spk2"><feTurbulence type="fractalNoise" baseFrequency="0.1" numOctaves="3" seed="9"/><feColorMatrix values="0 0 0 0 0  0 0 0 0 0  0 0 0 0 0  0 0 0 -2 1.1"/><feComposite in2="SourceGraphic" operator="in"/></filter><filter id="spk3"><feTurbulence type="fractalNoise" baseFrequency="0.4" numOctaves="2" seed="4"/><feColorMatrix values="0 0 0 0 0  0 0 0 0 0  0 0 0 0 0  0 0 0 -3 1.2"/><feComposite in2="SourceGraphic" operator="in"/></filter><filter id="spk"><feTurbulence type="fractalNoise" baseFrequency="0.35" numOctaves="2" seed="3"/><feColorMatrix values="0 0 0 0 0  0 0 0 0 0  0 0 0 0 0  0 0 0 -1.6 1.1"/><feComposite in2="SourceGraphic" operator="in"/></filter></defs><polygon points="0.4,86.5 64,116.7 157.9,167 251.8,212.2 332.2,252.4 379,230.7 379,322.8 370.8,329.6 328.9,335.3 288.7,327.9 238.4,299.4 151.2,254.1 47.3,197.1 0.4,178.7" fill="url(#sideg)" stroke="#5a5248" stroke-width="1"/><polygon points="0.4,86.5 64,116.7 157.9,167 251.8,212.2 332.2,252.4 379,230.7 379,322.8 370.8,329.6 328.9,335.3 288.7,327.9 238.4,299.4 151.2,254.1 47.3,197.1 0.4,178.7" fill="#3a342c" opacity="0.35" filter="url(#spk)"/><polygon points="0.4,54.7 8.7,49.6 47.3,42.9 85.8,49 124.4,71.4 214.9,121.7 312,170.3 379,198.8 379,230.7 332.2,252.4 251.8,212.2 157.9,167 64,116.7 0.4,86.5" fill="url(#topg)" stroke="#4a4540" stroke-width="1"/><polygon points="0.4,54.7 8.7,49.6 47.3,42.9 85.8,49 124.4,71.4 214.9,121.7 312,170.3 379,198.8 379,230.7 332.2,252.4 251.8,212.2 157.9,167 64,116.7 0.4,86.5" fill="#8a8276" opacity="0.1" filter="url(#spk2)"/><polygon points="0.4,86.5 64,116.7 157.9,167 251.8,212.2 332.2,252.4 379,230.7 379,322.8 370.8,329.6 328.9,335.3 288.7,327.9 238.4,299.4 151.2,254.1 47.3,197.1 0.4,178.7" fill="#e0d8c8" opacity="0.35" filter="url(#spk3)"/><path d="M85 90 L100 80 M180 140 L195 130 M275 185 L290 175 M52 110 L62 100 M150 165 L160 152 M245 210 L255 198" stroke="#6a6258" stroke-width="1.5"/></svg></div>
<div class="ml" style="top:679px">Texture Repeat</div>
<div class="inp" style="left:1358px;top:708px">1</div>
<div class="inp" style="left:1562px;top:708px">1</div>
<div class="ml" style="top:759px">Rotation</div>
<div class="a" style="left:1358px;top:799px;width:399px;height:8px;background:#ececec;border:1px solid #d4d4d4;border-radius:4px"></div>
<div class="a" style="left:1358px;top:799px;width:20px;height:8px;background:#1f6ff0;border-radius:4px"></div>
<div class="a" style="left:1371px;top:795px;width:16px;height:16px;background:#1f6ff0;border-radius:50%"></div>
<div class="a" style="left:1744px;top:828px;font-size:12px;color:#8a8a8a;line-height:14px">0°</div>
<div class="ml" style="top:863px">Texture Offset</div>
<div class="inp" style="left:1358px;top:892px">0</div>
<div class="inp" style="left:1562px;top:892px">0</div>
<div class="a" style="left:1521px;top:939px;width:94px;height:43px;border:1px solid #e0e0e0;border-radius:6px"></div>
<div class="a" style="left:1545px;top:953px;font-size:14.6px;color:#111;line-height:16px">Cancel</div>
<div class="a" style="left:1648px;top:953px;font-size:14.6px;color:#111;line-height:16px">Save Texture</div>
<svg class="a" style="left:1082px;top:712px" width="13" height="20" viewBox="-1 -1 13 20"><path d="M0 0 L0 14 L3.4 10.8 L6 16.6 L8.2 15.6 L5.7 10 L10 10 Z" fill="#000" stroke="#fff" stroke-width="1.1" stroke-linejoin="round"/></svg>
</body></html>
